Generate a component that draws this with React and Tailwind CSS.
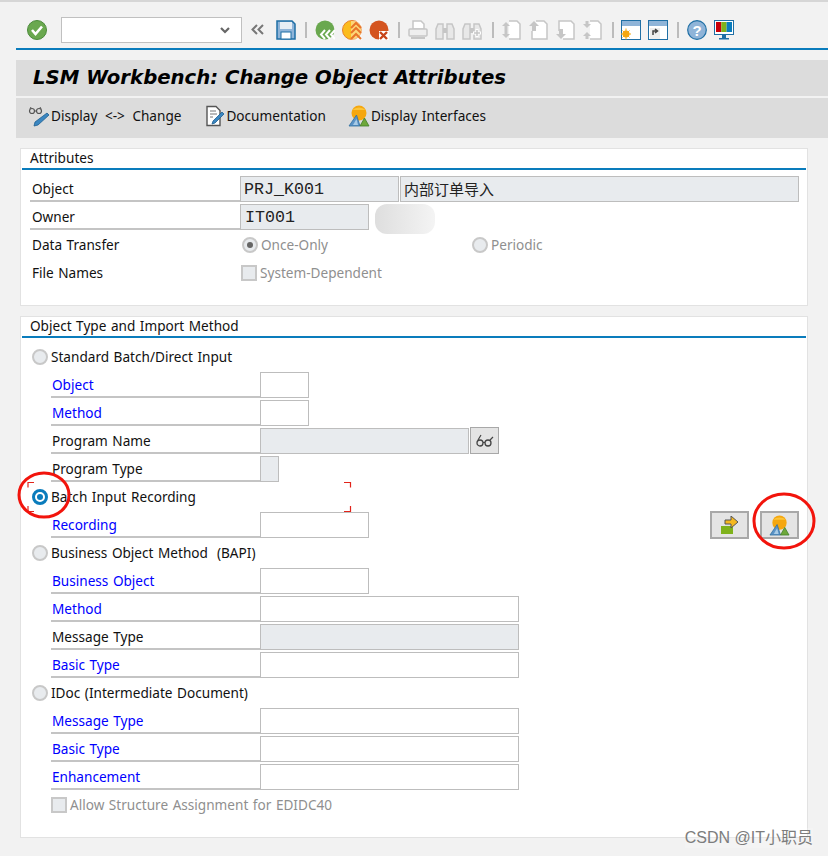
import React from 'react';

const ToolIcon = ({ ml = 0, w = 20, children }) => (
    <svg width={w} height="20" viewBox="0 0 20 20" className="shrink-0" style={{ marginLeft: ml }}>{children}</svg>
);

const Sep = ({ ml }) => <div className="w-[2px] h-[16px] bg-[#bcbcbc] shrink-0" style={{ marginLeft: ml }} />;

const grey = '#c6c6c6';

const Mountain = ({ size = 22 }) => (
    <svg width={size} height={size} viewBox="0 0 22 22">
        <circle cx="11" cy="8" r="7.500" fill="#f5a70f" />
        <path d="M4.500 5a7.500 5 0 0 1 13 0z" fill="#fcc53a" />
        <path d="M1 21 8.500 10l3.500 11z" fill="#5b93c7" stroke="#2f6f9f" strokeWidth="0.800" />
        <path d="M5 20l3.500-6 1.500 6z" fill="#a8cbe6" />
        <path d="M12 21l4.500-8 4.500 8z" fill="#6ea83a" stroke="#3f7d2a" strokeWidth="0.800" />
    </svg>
);

const Glasses = () => (
    <svg width="22" height="22" viewBox="0 0 22 22">
        <circle cx="4" cy="6" r="2.500" fill="none" stroke="#555" strokeWidth="1.200" />
        <circle cx="11" cy="6" r="2.500" fill="none" stroke="#555" strokeWidth="1.200" />
        <path d="M6.500 6h2M2 4l1-2M13 4l-1-2" stroke="#555" strokeWidth="1" fill="none" />
        <path d="M19 8l2 2-11 10-4 1 1-4z" fill="#3b86c0" stroke="#1d5f92" strokeWidth="0.800" />
    </svg>
);

const Doc = () => (
    <svg width="20" height="22" viewBox="0 0 20 22">
        <path d="M2 1.500h9l4 4v15H2z" fill="#fff" stroke="#555" strokeWidth="1.400" />
        <path d="M5 6h6M5 9h7M5 12h3" stroke="#777" strokeWidth="1" />
        <path d="M17 7l2 2-9 9-3 1 1-3z" fill="#3b86c0" stroke="#1d5f92" strokeWidth="0.800" />
    </svg>
);

const Radio = ({ on, disabled }) => {
    if (on) {
        return (
            <span className="w-[16px] h-[16px] rounded-full border-[3px] border-[#0a7cbc] bg-white flex items-center justify-center shrink-0">
                <span className="w-[6px] h-[6px] rounded-full bg-[#0a7cbc]" />
            </span>
        );
    }
    return (
        <span className={`w-[16px] h-[16px] rounded-full border-[2px] border-[#c8c8c8] flex items-center justify-center shrink-0 ${disabled ? 'bg-[#e8ebee]' : 'bg-white'}`}>
            {disabled === 'dot' && <span className="w-[6px] h-[6px] rounded-full bg-[#666]" />}
        </span>
    );
};

const Check = () => <span className="block w-[16px] h-[16px] border-[2px] border-[#c8c8c8] bg-[#e8ebee] shrink-0" />;

// label column with the grey rule under it, then the field
const Field = ({ label, link, w, ro, children }) => (
    <div className="h-[28px] flex items-start pl-[30px]">
        <div className={`w-[209px] h-[26px] mt-[1px] pt-[3px] border-b-2 border-[#c4c4c4] flex items-center pl-px shrink-0 ${link ? 'text-[#0000ff]' : 'text-[#111]'}`}>
            {label}
        </div>
        {w && (
            <div
                className={`h-[26px] mt-[1px] border border-[#bdbdbd] shrink-0 ${ro ? 'bg-[#e8ebee]' : 'bg-white'}`}
                style={{ width: w }}
            />
        )}
        {children}
    </div>
);

const Option = ({ label, on }) => (
    <div className="h-[28px] flex items-center pl-[11px] gap-[3px] text-[#111]">
        <Radio on={on} disabled={!on} />
        <span className="whitespace-pre">{label}</span>
    </div>
);

const Panel = ({ title, className, children }) => (
    <section className={`mx-[20px] bg-white border border-[#e2e2e2] ${className}`}>
        <div className="h-[21px] mx-px pl-[8px] border-b-2 border-[#0a7cbc] leading-[18px] text-[#111]">{title}</div>
        {children}
    </section>
);

const AttrRow = ({ label, children }) => (
    <div className="h-[28px] flex items-center pl-[11px] pb-[2px]">
        <span className="w-[210px] shrink-0 text-[#111]">{label}</span>
        {children}
    </div>
);

const ValueField = ({ w, mono, children }) => (
    <div
        className={`h-[26px] border border-[#bdbdbd] bg-[#e8ebee] flex items-center shrink-0 text-[#222] ${mono ? 'pl-[3px] font-["Liberation_Mono",monospace] text-[16.670px]' : 'pl-[3px] font-["Noto_Sans_CJK_SC",sans-serif] text-[15px]'}`}
        style={{ width: w }}
    >
        {children}
    </div>
);

const Toolbar = () => (
    <div className="h-[48px] ml-[16px] border-b-2 border-[#0a7cbc] flex items-center pt-[10px]">
        <ToolIcon ml={11}>
            <circle cx="10" cy="10" r="9.500" fill="#6aa84f" stroke="#4a8a3a" />
            <path d="M5 10l3.500 4L15 6.500" fill="none" stroke="#fff" strokeWidth="2.600" />
        </ToolIcon>
        <div className="w-[181px] h-[26px] ml-[14px] bg-white border border-[#c0c0c0] flex items-center justify-end pr-[11px] shrink-0">
            <svg width="10" height="7" viewBox="0 0 10 7"><path d="M1 1l4 4 4-4" fill="none" stroke="#666" strokeWidth="2.200" /></svg>
        </div>
        <ToolIcon ml={6}>
            <path d="M9 5L4.500 9.500 9 14M15 5l-4.500 4.500L15 14" fill="none" stroke="#777" strokeWidth="2" />
        </ToolIcon>
        <ToolIcon ml={8}>
            <path d="M1 1h15l3 3v15H1z" fill="#8fb4d8" stroke="#1f6fa5" strokeWidth="1.500" />
            <rect x="4" y="2" width="12" height="7" fill="#e6eef5" />
            <rect x="5" y="12" width="10" height="7" fill="#fff" stroke="#1f6fa5" />
        </ToolIcon>
        <Sep ml={9} />
        <ToolIcon ml={8}>
            <circle cx="10" cy="10" r="9.500" fill="#6aa84f" />
            <path d="M10 10l-4 4.500 4 4.500M15 10l-4 4.500 4 4.500M20 10l-4 4.500 4 4.500" fill="none" stroke="#fff" strokeWidth="2" />
        </ToolIcon>
        <ToolIcon ml={7}>
            <circle cx="10" cy="10" r="9.500" fill="#fbbc1e" stroke="#e8812a" />
            <rect x="9" y="1" width="11" height="19" fill="#fff" opacity="0.400" />
            <path d="M9 8l5-5 5 5M9 13l5-5 5 5M9 19l5-5 5 5" fill="none" stroke="#e8742a" strokeWidth="2" />
        </ToolIcon>
        <ToolIcon ml={7}>
            <circle cx="10" cy="10" r="9.500" fill="#d4541f" />
            <rect x="10" y="11" width="10" height="9" fill="#fff" />
            <path d="M11 12l7 7M18 12l-7 7" stroke="#c8451a" strokeWidth="2.400" />
        </ToolIcon>
        <Sep ml={9} />
        <ToolIcon ml={8}>
            <path d="M5 1h8l3 3v5H5z" fill="#fff" stroke={grey} strokeWidth="1.500" />
            <rect x="1" y="9" width="18" height="7" rx="1" fill="#eee" stroke={grey} strokeWidth="1.500" />
            <rect x="3" y="17" width="14" height="2" fill={grey} />
        </ToolIcon>
        <ToolIcon ml={7}>
            <path d="M3 4h5v15H1V9zM12 4h5l2 5v10h-7z" fill="#e8e8e8" stroke={grey} strokeWidth="1.500" />
            <rect x="8" y="8" width="4" height="5" fill={grey} />
        </ToolIcon>
        <ToolIcon ml={7}>
            <path d="M3 4h5v15H1V9zM12 4h5l2 5v10h-7z" fill="#e8e8e8" stroke={grey} strokeWidth="1.500" />
            <rect x="8" y="8" width="4" height="5" fill={grey} />
            <path d="M15 9v8M11 13h8" stroke="#fff" strokeWidth="3" />
            <path d="M15 10v6M12 13h6" stroke={grey} strokeWidth="1.500" />
        </ToolIcon>
        <Sep ml={10} />
        <ToolIcon ml={7}>
            <path d="M8 1h8l3 3v15H8" fill="#fff" stroke={grey} strokeWidth="1.500" />
            <path d="M5 2l4 4H1zM5 18l4-4H1z" fill={grey} />
            <rect x="3.500" y="6" width="3" height="8" fill={grey} />
        </ToolIcon>
        <ToolIcon ml={7}>
            <path d="M8 1h8l3 3v15H4v-8" fill="#fff" stroke={grey} strokeWidth="1.500" />
            <path d="M6 1l5 5H1z" fill={grey} />
            <rect x="4" y="6" width="4" height="5" fill={grey} />
        </ToolIcon>
        <ToolIcon ml={7}>
            <path d="M4 11V1h12l3 3v15H8" fill="#fff" stroke={grey} strokeWidth="1.500" />
            <path d="M6 19l5-5H1z" fill={grey} />
            <rect x="4" y="9" width="4" height="5" fill={grey} />
        </ToolIcon>
        <ToolIcon ml={7}>
            <path d="M8 1h8l3 3v15H8" fill="#fff" stroke={grey} strokeWidth="1.500" />
            <path d="M5 8l4-4H1zM5 12l4 4H1z" fill={grey} />
            <rect x="3.500" y="1" width="3" height="3" fill={grey} />
            <rect x="3.500" y="16" width="3" height="3" fill={grey} />
        </ToolIcon>
        <Sep ml={10} />
        <ToolIcon ml={7}>
            <rect x="0.500" y="0.500" width="19" height="19" fill="#fff" stroke="#1f6fa5" />
            <rect x="1" y="1" width="18" height="5" fill="#8fb4d8" />
            <circle cx="5" cy="14" r="3.500" fill="#f5a70f" />
            <path d="M5 8.500v11M0 14h10M1.500 10.500l7 7M8.500 10.500l-7 7" stroke="#f5a70f" strokeWidth="1" />
        </ToolIcon>
        <ToolIcon ml={7}>
            <rect x="0.500" y="0.500" width="19" height="19" fill="#fff" stroke="#1f6fa5" />
            <rect x="1" y="1" width="18" height="5" fill="#8fb4d8" />
            <rect x="2" y="8" width="10" height="11" fill="#eee" />
            <path d="M5 15v-4h4M7 9l2.500 2L7 13" fill="none" stroke="#444" strokeWidth="1.500" />
        </ToolIcon>
        <Sep ml={9} />
        <ToolIcon ml={8}>
            <circle cx="10" cy="10" r="9.300" fill="#8fb4d8" stroke="#1f6fa5" strokeWidth="1.200" />
            <text x="10" y="15.500" textAnchor="middle" fontSize="15" fontWeight="700" fontFamily="Liberation Sans" fill="#fff">?</text>
        </ToolIcon>
        <ToolIcon ml={7}>
            <rect x="0.500" y="0.500" width="19" height="14" fill="#fff" stroke="#1f6fa5" />
            <rect x="2" y="2" width="5.300" height="10" fill="#c8000a" />
            <rect x="7.300" y="2" width="5.300" height="10" fill="#7fb21c" />
            <rect x="12.600" y="2" width="5.400" height="10" fill="#0a7cbc" />
            <path d="M8 15h4v3h3v1.500H5V18h3z" fill="#1f6fa5" />
        </ToolIcon>
    </div>
);

export default function App() {
    return (
        <div className="relative w-[828px] h-[856px] overflow-hidden bg-[#f2f2f2] border-t-2 border-[#d6d6d6] font-['Noto_Sans',sans-serif] text-[13.600px] [word-spacing:1px]">
            <Toolbar />

            <div className="ml-[16px] mt-[10px] h-[36px] bg-[#dcdcdc] flex items-center pl-[17px] font-['DejaVu_Sans',sans-serif] font-bold italic text-[19.700px] [word-spacing:0px] text-black">
                LSM Workbench: Change Object Attributes
            </div>
            <div className="ml-[16px] mt-[2px] h-[40px] pb-[4px] bg-[#dcdcdc] flex items-center text-[#111] pl-[12px]">
                <Glasses />
                <span className="ml-px whitespace-pre [word-spacing:4px]">Display {'<->'} Change</span>
                <span className="ml-[24px]"><Doc /></span>
                <span className="ml-px">Documentation</span>
                <span className="ml-[22px]"><Mountain /></span>
                <span className="ml-px">Display Interfaces</span>
            </div>

            <Panel title="Attributes" className="mt-[10px] h-[158px]">
                <div className="pt-[6px]">
                    <div className="h-[28px] flex items-start pl-[9px]">
                        <div className="w-[210px] h-[26px] pt-[3px] border-b-2 border-[#c4c4c4] pl-[2px] flex items-center text-[#111]">Object</div>
                        <ValueField w={159} mono>PRJ_K001</ValueField>
                        <div className="ml-px"><ValueField w={399}>内部订单导入</ValueField></div>
                    </div>
                    <div className="h-[28px] flex items-start pl-[9px]">
                        <div className="w-[210px] h-[26px] pt-[3px] border-b-2 border-[#c4c4c4] pl-[2px] flex items-center text-[#111]">Owner</div>
                        <ValueField w={129} mono><span className="pl-px">IT001</span></ValueField>
                        <div className="ml-[6px] w-[60px] h-[30px] rounded-[12px] bg-gradient-to-r from-[#dedede] to-[#f4f4f4]" />
                    </div>
                    <AttrRow label="Data Transfer">
                        <Radio disabled="dot" />
                        <span className="ml-[3px] w-[211px] text-[#8f8f8f]">Once-Only</span>
                        <Radio disabled />
                        <span className="ml-[3px] text-[#8f8f8f]">Periodic</span>
                    </AttrRow>
                    <AttrRow label="File Names">
                        <span className="-ml-px"><Check /></span>
                        <span className="ml-[3px] text-[#8f8f8f]">System-Dependent</span>
                    </AttrRow>
                </div>
            </Panel>

            <Panel title="Object Type and Import Method" className="mt-[10px] h-[522px]">
                <div className="pt-[5px]">
                    <Option label="Standard Batch/Direct Input" />
                    <Field label="Object" link w={49} />
                    <Field label="Method" link w={49} />
                    <Field label="Program Name" w={209} ro>
                        <div className="ml-px w-[29px] h-[27px] border border-[#a8a8a8] bg-[#e4e4e4] flex items-center justify-center shrink-0">
                            <svg width="20" height="14" viewBox="0 0 20 14">
                                <circle cx="5" cy="9" r="3" fill="none" stroke="#444" strokeWidth="1.300" />
                                <circle cx="13" cy="9" r="3" fill="none" stroke="#444" strokeWidth="1.300" />
                                <path d="M8 8.500h2M3 6l3-5M15 6l3-3" stroke="#444" strokeWidth="1.200" fill="none" />
                            </svg>
                        </div>
                    </Field>
                    <Field label="Program Type" w={19} ro />
                    <Option label="Batch Input Recording" on />
                    <Field label="Recording" link w={109}>
                        <div className="ml-[341px] w-[39px] h-[28px] border-2 border-[#a8a8a8] bg-[#e4e4e4] flex items-center justify-center shrink-0">
                            <svg width="20" height="18" viewBox="0 0 20 18">
                                <rect x="1" y="10" width="12" height="8" fill="#7fb21c" />
                                <path d="M5 4h6V0l7 6-7 6V8H5z" fill="#f5b81f" stroke="#555" strokeWidth="1" />
                            </svg>
                        </div>
                        <div className="ml-[11px] w-[39px] h-[28px] border-2 border-[#a8a8a8] bg-[#e4e4e4] flex items-center justify-center shrink-0">
                            <Mountain size={21} />
                        </div>
                    </Field>
                    <Option label="Business Object Method  (BAPI)" />
                    <Field label="Business Object" link w={109} />
                    <Field label="Method" link w={259} />
                    <Field label="Message Type" w={259} ro />
                    <Field label="Basic Type" link w={259} />
                    <Option label="IDoc (Intermediate Document)" />
                    <Field label="Message Type" link w={259} />
                    <Field label="Basic Type" link w={259} />
                    <Field label="Enhancement" link w={259} />
                    <div className="h-[28px] flex items-center pl-[30px]">
                        <Check />
                        <span className="ml-[3px] text-[#8f8f8f]">Allow Structure Assignment for EDIDC40</span>
                    </div>
                </div>
            </Panel>

            {/* red focus brackets and the hand drawn circles on top of the screenshot */}
            <svg width="828" height="856" className="absolute left-0 top-[-2px] pointer-events-none" fill="none">
                <path d="M34 482.500h-6v5M344 482.500h6.500v5M28 506v5.500h6M350.500 506v5.500H344" stroke="#e2231a" strokeWidth="1.200" />
                <ellipse cx="44" cy="495" rx="25" ry="22" stroke="#f2140c" strokeWidth="3" />
                <ellipse cx="784" cy="521" rx="30" ry="27" stroke="#f2140c" strokeWidth="3" />
            </svg>

            <div className="absolute right-[15px] bottom-[8px] bg-white/20 text-[#7d7d7d] text-[16px] [word-spacing:0px] leading-[20px] font-['Liberation_Sans','Noto_Sans_CJK_SC',sans-serif]">
                CSDN @IT小职员
            </div>
        </div>
    );
}
